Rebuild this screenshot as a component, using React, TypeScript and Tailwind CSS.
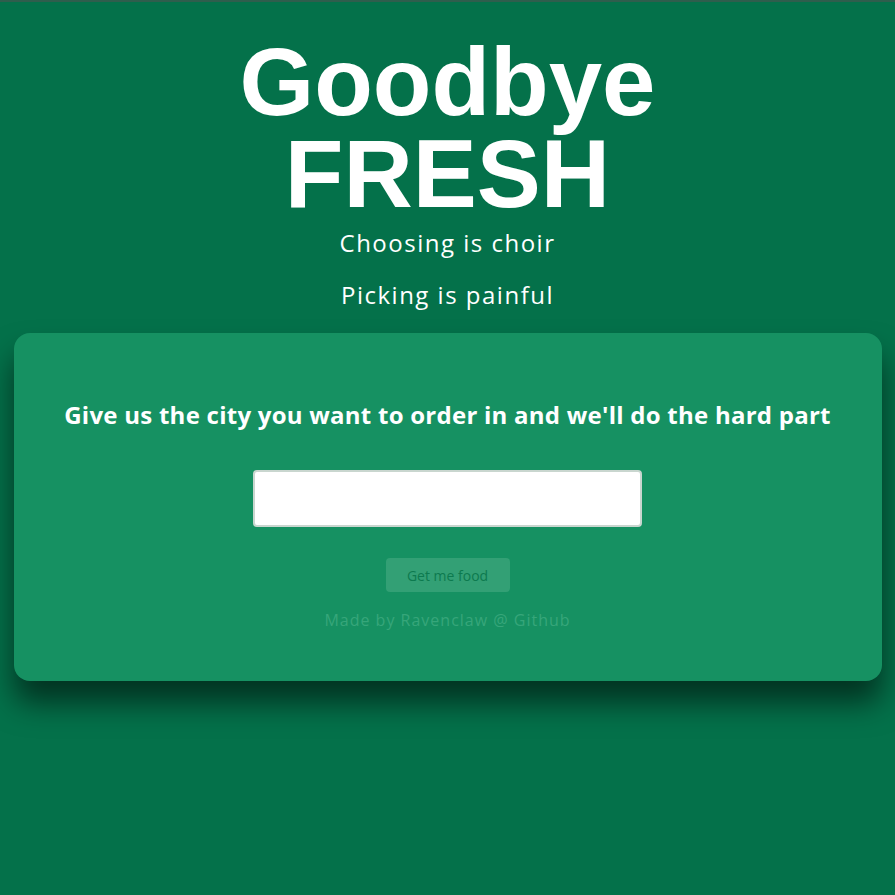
import React from 'react';

const round = { fontFamily: '"Open Sans", "Noto Sans", sans-serif' };

export default function App() {
  return (
    <div className="min-h-[895px] bg-[#04714a] border-t-2 border-[#2f5e4d] flex flex-col items-center">
      <h1
        className="mt-[34px] text-white font-bold text-[96px] leading-[92px] text-center"
        style={{ fontFamily: '"Liberation Sans", Arial, sans-serif' }}
      >
        Goodbye
        <br />
        FRESH
      </h1>
      <div className="text-white text-[24px] leading-[36px] text-center mt-[5px] tracking-[1.5px]" style={round}>
        <p>Choosing is choir</p>
        <p className="mt-[16px]">Picking is painful</p>
      </div>

      <div className="mt-[20px] w-[868px] h-[348px] bg-[#169162] rounded-[16px] shadow-[0_22px_30px_rgba(0,0,0,0.55)] flex flex-col items-center pt-[66px]" style={round}>
        <h2 className="text-white font-bold text-[24px] leading-[32px] text-center tracking-[0.25px]">
          Give us the city you want to order in and we'll do the hard part
        </h2>
        <input
          type="text"
          className="mt-[39px] w-[389px] h-[57px] bg-white border-2 border-[#c9d6cf] rounded-[4px] outline-none px-3"
        />
        <button
          type="button"
          disabled
          className="mt-[31px] w-[124px] h-[34px] rounded-[4px] bg-[#33a075] text-[#0d7a4f] text-[14px]"
        >
          Get me food
        </button>
        <p className="mt-[16px] text-[#36a67a] text-[16px] leading-[24px] tracking-[1px]">Made by Ravenclaw @ Github</p>
      </div>
    </div>
  );
}
